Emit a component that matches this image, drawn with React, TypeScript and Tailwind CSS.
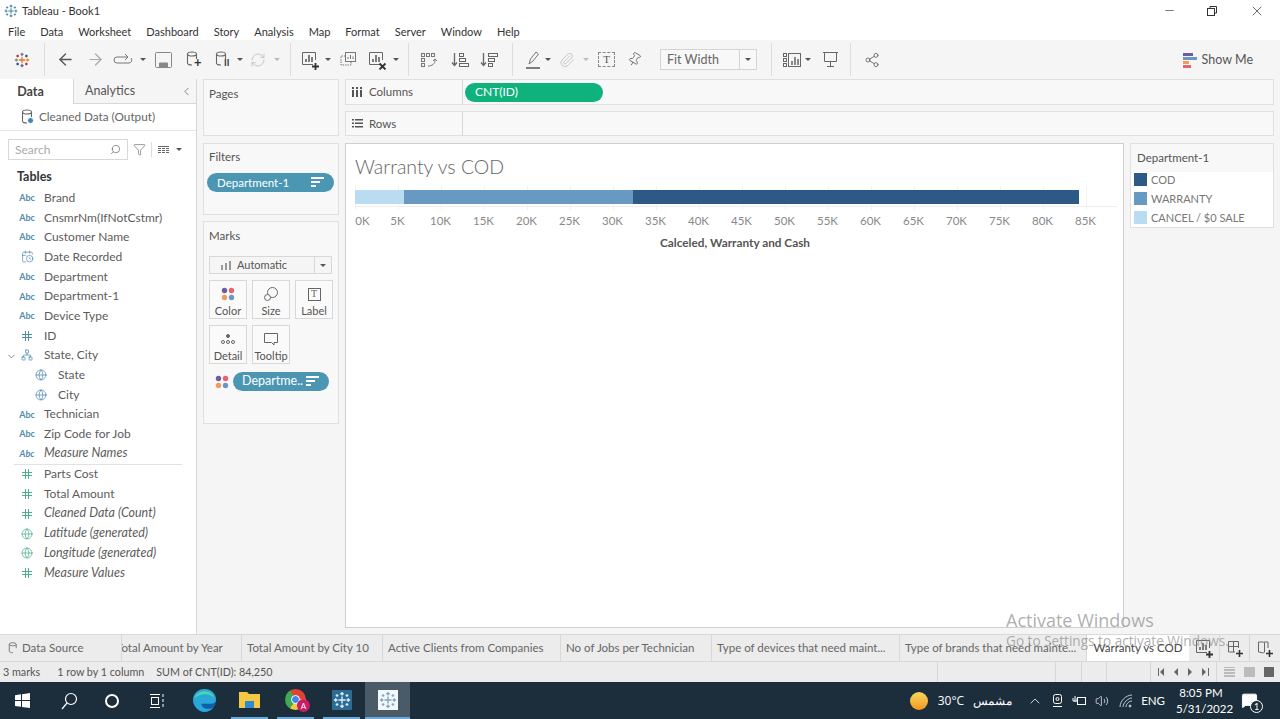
import { ArrowLeft, ArrowRight, CalendarClock, ChevronDown, ChevronLeft, Globe, Network, Search, Filter, X, Minus, Share2, Pin, RefreshCw, Paperclip, Volume2, ChevronUp, MessageSquare } from 'lucide-react';

const FONT = "font-['Lato','Open_Sans',sans-serif]";

const MENU = ['File', 'Data', 'Worksheet', 'Dashboard', 'Story', 'Analysis', 'Map', 'Format', 'Server', 'Window', 'Help'];

type Field = { name: string; kind: 'abc' | 'hash' | 'date' | 'tree' | 'globe'; italic?: boolean; indent?: boolean; green?: boolean };

const DIMENSIONS: Field[] = [
  { name: 'Brand', kind: 'abc' },
  { name: 'CnsmrNm(IfNotCstmr)', kind: 'abc' },
  { name: 'Customer Name', kind: 'abc' },
  { name: 'Date Recorded', kind: 'date' },
  { name: 'Department', kind: 'abc' },
  { name: 'Department-1', kind: 'abc' },
  { name: 'Device Type', kind: 'abc' },
  { name: 'ID', kind: 'hash' },
  { name: 'State, City', kind: 'tree' },
  { name: 'State', kind: 'globe', indent: true },
  { name: 'City', kind: 'globe', indent: true },
  { name: 'Technician', kind: 'abc' },
  { name: 'Zip Code for Job', kind: 'abc' },
  { name: 'Measure Names', kind: 'abc', italic: true },
];

const MEASURES: Field[] = [
  { name: 'Parts Cost', kind: 'hash', green: true },
  { name: 'Total Amount', kind: 'hash', green: true },
  { name: 'Cleaned Data (Count)', kind: 'hash', green: true, italic: true },
  { name: 'Latitude (generated)', kind: 'globe', green: true, italic: true },
  { name: 'Longitude (generated)', kind: 'globe', green: true, italic: true },
  { name: 'Measure Values', kind: 'hash', green: true, italic: true },
];

const TICKS = ['0K', '5K', '10K', '15K', '20K', '25K', '30K', '35K', '40K', '45K', '50K', '55K', '60K', '65K', '70K', '75K', '80K', '85K'];

const TABS = [
  { label: 'Total Amount by City 10', w: 'w-[141px]' },
  { label: 'Active Clients from Companies', w: 'w-[178px]' },
  { label: 'No of Jobs per Technician', w: 'w-[151px]' },
  { label: 'Type of devices that need maint...', w: 'w-[188px]' },
  { label: 'Type of brands that need mainte...', w: 'w-[187px]' },
];

function Db({ className = '', width = 14, height = 17 }: { className?: string; width?: number; height?: number }) {
  return (
    <svg width={width} height={height} viewBox="0 0 14 17" fill="none" stroke="currentColor" strokeWidth="1.100" className={className}>
      <ellipse cx="6" cy="3" rx="4.500" ry="2" />
      <path d="M1.500 3v9c0 1.200 2 2 4.500 2M10.500 3v5" />
    </svg>
  );
}

function FieldIcon({ f }: { f: Field }) {
  const color = f.green ? 'text-[#4fb08e]' : 'text-[#4f8cab]';
  if (f.kind === 'abc') return <span className={`text-[9px] font-bold ${color}`}>Abc</span>;
  if (f.kind === 'hash') {
    return (
      <svg width="10" height="10" viewBox="0 0 10 10" fill="none" stroke="currentColor" className={color}>
        <path d="M3.500 0v10M6.500 0v10M0 3.500h10M0 6.500h10" />
      </svg>
    );
  }
  if (f.kind === 'date') return <CalendarClock size={13} strokeWidth={1.300} className={color} />;
  if (f.kind === 'tree') return <Network size={12} strokeWidth={1.500} className={color} />;
  return <Globe size={12} strokeWidth={1.500} className={color} />;
}

function FieldRow({ f }: { f: Field }) {
  return (
    <div className={`flex h-[19.7px] items-center text-[#5c5c5c] ${f.italic ? 'text-[12.500px] italic' : 'text-[12px]'} ${f.indent ? 'pl-[33px]' : 'pl-[19px]'}`}>
      <span className="flex w-[16px] shrink-0 items-center justify-center"><FieldIcon f={f} /></span>
      <span className="ml-[9px] whitespace-nowrap">{f.name}</span>
    </div>
  );
}

function Sorted() {
  return (
    <svg width="14" height="11" viewBox="0 0 14 11" fill="currentColor">
      <rect x="0" y="0" width="13" height="2" />
      <rect x="0" y="4" width="9" height="2" />
      <rect x="0" y="8" width="5" height="2" />
    </svg>
  );
}

function Dots({ size = 14 }: { size?: number }) {
  return (
    <svg width={size} height={size} viewBox="0 0 14 14">
      <circle cx="3.500" cy="3.500" r="2.700" fill="#6f5c9d" />
      <circle cx="10.500" cy="3.500" r="2.700" fill="#e8636b" />
      <circle cx="3.500" cy="10.500" r="2.700" fill="#ef9c64" />
      <circle cx="10.500" cy="10.500" r="2.700" fill="#6b97c6" />
    </svg>
  );
}

function MarkCard({ label, children }: { label: string; children: React.ReactNode }) {
  return (
    <div className="flex h-[39px] w-[38px] flex-col items-center border border-[#d8d8d8] bg-[#fafafa] pt-[4px]">
      <div className="flex h-[18px] items-center justify-center text-[#666]">{children}</div>
      <span className="mt-[1px] text-[11px] leading-[14px] text-[#555]">{label}</span>
    </div>
  );
}

function BarIcon({ plus, x }: { plus?: boolean; x?: boolean }) {
  return (
    <svg width="20" height="20" viewBox="0 0 20 20" fill="none" stroke="#666" strokeWidth="1">
      <path d="M13 14.500H2.500V2.500H15.500V10" />
      <path d="M6 12V9M9 12V5M12 12V7" strokeWidth="1.500" stroke="#555" />
      {plus && <path d="M12 16.500h7M15.500 13v7" strokeWidth="1.800" stroke="#333" />}
      {x && <path d="M12.500 13.500l6 6M18.500 13.500l-6 6" strokeWidth="1.800" stroke="#333" />}
    </svg>
  );
}

function Caret({ light, className = '' }: { light?: boolean; className?: string }) {
  return <span className={`inline-block h-0 w-0 shrink-0 border-x-[3px] border-t-[3px] border-x-transparent ${light ? 'border-t-[#bbb]' : 'border-t-[#555]'} ${className}`} />;
}

function Sep({ className = '' }: { className?: string }) {
  return <span className={`h-[33px] w-px shrink-0 bg-[#dcdcdc] ${className}`} />;
}

function TableauMark({ size = 20, color = 'multi' }: { size?: number; color?: string }) {
  const c = (v: string) => (color === 'multi' ? v : color);
  return (
    <svg width={size} height={size} viewBox="0 0 20 20" fill="none" strokeWidth="1.600">
      <path d="M10 6v8M6 10h8" stroke={c('#e8762d')} />
      <path d="M10 1v4M8 3h4" stroke={c('#59879b')} />
      <path d="M10 15v4M8 17h4" stroke={c('#5b6591')} />
      <path d="M1 10h4M3 8v4" stroke={c('#7099a6')} />
      <path d="M15 10h4M17 8v4" stroke={c('#eb912b')} />
      <path d="M4.500 3.500v3M3 5h3" stroke={c('#c72035')} />
      <path d="M15.500 3.500v3M14 5h3" stroke={c('#1f447e')} />
      <path d="M4.500 13.500v3M3 15h3" stroke={c('#1f447e')} />
      <path d="M15.500 13.500v3M14 15h3" stroke={c('#c72035')} />
    </svg>
  );
}

export default function App() {
  return (
    <div className={`relative flex h-[719px] w-[1280px] flex-col overflow-hidden bg-[#f5f5f5] ${FONT} text-[#555]`}>
      {/* Title bar */}
      <div className="flex h-[21px] items-center bg-white pl-[4px]">
        <TableauMark size={14} color="#4a86a8" />
        <span className="ml-[4px] pt-[2px] text-[11px] text-[#333]">Tableau - Book1</span>
        <div className="ml-auto flex items-center text-[#333]">
          <Minus size={13} strokeWidth={1.200} className="mr-[30px]" />
          <svg width="12" height="12" viewBox="0 0 12 12" fill="none" stroke="#333" className="mr-[31px]"><rect x="1.500" y="3.500" width="7" height="7" /><path d="M4 3.500V1.500h6.500V8H8.500" /></svg>
          <X size={16} strokeWidth={1.100} className="mr-[15px]" />
        </div>
      </div>

      {/* Menu bar */}
      <div className="flex h-[19px] items-center gap-[15px] bg-white pl-[8px] pt-[3px] text-[11px] text-[#333]">
        {MENU.map((m) => <span key={m}>{m}</span>)}
      </div>

      {/* Toolbar */}
      <div className="flex h-[39px] items-center bg-[#f5f5f5] pl-[14px] text-[#666]">
        <TableauMark size={16} />
        <Sep className="ml-[14px]" />
        <ArrowLeft size={19} strokeWidth={1.700} className="ml-[11px] text-[#555]" />
        <ArrowRight size={19} strokeWidth={1.500} className="ml-[11px] text-[#aaa]" />
        <svg width="20" height="14" viewBox="0 0 20 14" fill="none" stroke="#777" className="ml-[8px]"><path d="M14 4H4a3 3 0 0 0 0 6h12a3 3 0 0 0 2-5M12 1l3 3-3 3" /></svg>
        <Caret className="ml-[7px]" />
        <svg width="17" height="16" viewBox="0 0 17 16" fill="none" stroke="#888" className="ml-[9px]"><rect x=".5" y=".5" width="16" height="15" rx="1" /><path d="M4.500 15v-4h8v4" fill="#888" /></svg>
        <span className="relative ml-[14px] flex"><Db /><span className="absolute -bottom-[1px] left-[8px] text-[13px] font-bold leading-none text-[#333]">+</span></span>
        <span className="relative ml-[15px] flex"><Db /><span className="absolute bottom-[1px] left-[9px] text-[9px] font-bold leading-none text-[#333]">II</span></span>
        <Caret className="ml-[8px]" />
        <RefreshCw size={16} strokeWidth={1.200} className="ml-[7px] text-[#bbb]" />
        <Caret light className="ml-[8px]" />
        <Sep className="ml-[10px]" />
        <span className="ml-[9px] flex"><BarIcon plus /></span>
        <Caret className="ml-[5px]" />
        <svg width="20" height="20" viewBox="0 0 20 20" fill="none" stroke="#777" className="ml-[7px]"><rect x="7.500" y="2.500" width="10" height="9" /><path d="M10 9V7M12.500 9V5M15 9V6.500" /><path d="M7.500 6H3v9h10v-3.500" strokeDasharray="1.500 1" /></svg>
        <span className="ml-[9px] flex"><BarIcon x /></span>
        <Caret className="ml-[6px]" />
        <Sep className="ml-[9px]" />
        <svg width="20" height="20" viewBox="0 0 20 20" fill="none" stroke="#777" className="ml-[10px]"><rect x="2.500" y="3.500" width="3" height="3" /><rect x="7.500" y="3.500" width="3" height="3" /><rect x="12.500" y="3.500" width="3" height="3" /><rect x="2.500" y="8.500" width="3" height="3" /><rect x="2.500" y="13.500" width="3" height="3" /><path d="M9 16c4 0 7-2 7-6M14 11l2-2 2 2" /></svg>
        <svg width="20" height="18" viewBox="0 0 20 18" fill="none" stroke="#666" className="ml-[11px]"><path d="M4.500 2v12M2 11.500l2.500 3 2.500-3" strokeWidth="1.300" /><rect x="9.500" y="2.500" width="4" height="3" /><rect x="9.500" y="7.500" width="6" height="3" /><rect x="9.500" y="12.500" width="9" height="3" /></svg>
        <svg width="20" height="18" viewBox="0 0 20 18" fill="none" stroke="#666" className="ml-[9px]"><path d="M4.500 2v12M2 11.500l2.500 3 2.500-3" strokeWidth="1.300" /><rect x="9.500" y="2.500" width="9" height="3" /><rect x="9.500" y="7.500" width="6" height="3" /><rect x="9.500" y="12.500" width="4" height="3" /></svg>
        <Sep className="ml-[13px]" />
        <svg width="18" height="20" viewBox="0 0 18 20" fill="none" stroke="#777" className="ml-[12px]"><path d="M4 14l1.500-5L11 2l2.500 2L8 11z" /><path d="M1 18h14" strokeWidth="1.500" stroke="#555" /></svg>
        <Caret className="ml-[2px]" />
        <Paperclip size={16} strokeWidth={1.200} className="ml-[8px] text-[#bbb]" />
        <Caret light className="ml-[8px]" />
        <span className="ml-[9px] flex h-[15px] w-[17px] items-center justify-center border border-dashed border-[#888] font-['Liberation_Serif',serif] text-[11px] text-[#555]">T</span>
        <Pin size={15} strokeWidth={1.300} className="ml-[12px] rotate-[30deg]" />
        <div className="ml-[18px] flex h-[21px] w-[97px] shrink-0 items-center border border-[#d4d4d4] bg-[#f8f8f8] text-[12.500px] text-[#666]">
          <span className="flex-1 pl-[6px] pt-[1px]">Fit Width</span>
          <span className="flex h-full w-[17px] items-center justify-center border-l border-[#d4d4d4]"><Caret /></span>
        </div>
        <Sep className="ml-[14px]" />
        <svg width="20" height="16" viewBox="0 0 20 16" fill="none" stroke="#666" className="ml-[10px]"><rect x="1.500" y="1.500" width="3" height="3" /><rect x="1.500" y="6.500" width="3" height="3" /><rect x="1.500" y="11.500" width="3" height="3" /><rect x="6.500" y="1.500" width="12" height="13" /><path d="M10 13V9M13 13V5M16 13V7" strokeWidth="1.500" /></svg>
        <Caret className="ml-[3px]" />
        <svg width="17" height="17" viewBox="0 0 17 17" fill="none" stroke="#666" className="ml-[11px]"><path d="M1 1.500h15M2.500 1.500v9h12v-9M8.500 10.500v5M5 15.500h7" /></svg>
        <Sep className="ml-[11px]" />
        <Share2 size={16} strokeWidth={1.300} className="ml-[13px]" />
        <div className="ml-auto mr-[27px] flex items-center gap-[5px] pt-[1px] text-[12.500px] text-[#555]">
          <svg width="14" height="15" viewBox="0 0 14 15"><rect y="0" width="10" height="3" fill="#6f5c9d" /><rect y="4" width="14" height="3" fill="#6b97c6" /><rect y="8" width="6" height="3" fill="#ef9c64" /><rect y="12" width="8" height="3" fill="#e8636b" /></svg>
          Show Me
        </div>
      </div>

      {/* Body */}
      <div className="flex min-h-0 flex-1">
        {/* Data pane */}
        <aside className="flex w-[197px] shrink-0 flex-col border-r border-[#d8d8d8] bg-white">
          <div className="flex h-[25px] text-[12.500px]">
            <div className="flex w-[73px] items-center justify-center pr-[12px] pt-[1px] font-bold text-[#444]">Data</div>
            <div className="flex flex-1 items-center border-b border-l border-[#d8d8d8] bg-[#f5f5f5] pl-[11px] pt-[1px]">
              Analytics
              <ChevronLeft size={13} strokeWidth={1.300} className="ml-auto mr-[3px]" />
            </div>
          </div>
          <div className="flex h-[27px] items-center border-b border-[#e4e4e4] pl-[21px] text-[11.750px] text-[#666]">
            <span className="relative flex"><Db /><span className="absolute bottom-[2px] left-[6px] h-[7px] w-[7px] rounded-full border border-white bg-[#3c88b5]" /></span>
            <span className="ml-[4px]">Cleaned Data (Output)</span>
          </div>
          <div className="mt-[8px] flex h-[21px] items-center pl-[8px]">
            <div className="flex h-[21px] w-[120px] items-center justify-between border border-[#d8d8d8] px-[6px] text-[12px] text-[#aaa]">
              Search
              <Search size={11} strokeWidth={1.500} className="-scale-x-100 text-[#666]" />
            </div>
            <Filter size={13} strokeWidth={1.100} className="ml-[5px] text-[#555]" />
            <span className="ml-[5px] h-[15px] w-px bg-[#ddd]" />
            <svg width="11" height="8" viewBox="0 0 11 8" className="ml-[6px]" fill="#666"><path d="M0 0h11v1H0zM0 2h3v1H0zM4 2h3v1H4zM8 2h3v1H8zM0 4h3v1H0zM4 4h3v1H4zM8 4h3v1H8zM0 6h3v1H0zM4 6h3v1H4zM8 6h3v1H8z" /></svg>
            <Caret className="ml-[7px]" />
          </div>
          <div className="mt-[8px] pl-[17px] text-[12.500px] font-bold leading-[18px] text-[#333]">Tables</div>
          <div className="relative mt-[2px]">
            <ChevronDown size={11} strokeWidth={1.500} className="absolute left-[6px] top-[163px] text-[#555]" />
            {DIMENSIONS.map((f) => <FieldRow key={f.name} f={f} />)}
          </div>
          <div className="mx-[14px] h-px bg-[#e2e2e2]" />
          {MEASURES.map((f) => <FieldRow key={f.name} f={f} />)}
        </aside>

        {/* Cards column */}
        <div className="flex w-[148px] shrink-0 flex-col pl-[6px]">
          <section className="h-[57px] w-[136px] border border-[#e0e0e0] bg-[#f8f8f8] pl-[5px] pt-[5px] text-[11.500px]">Pages</section>
          <section className="mt-[7px] h-[72px] w-[136px] border border-[#e0e0e0] bg-[#f8f8f8] pt-[4px] text-[11.500px]">
            <div className="pl-[5px]">Filters</div>
            <div className="ml-[3px] mt-[8px] flex h-[19px] w-[127px] items-center justify-between rounded-full bg-[#4b97b3] pl-[10px] pr-[9px] text-[11.500px] text-white">
              Department-1
              <Sorted />
            </div>
          </section>
          <section className="mt-[6px] h-[203px] w-[136px] border border-[#e0e0e0] bg-[#f8f8f8] pt-[5px] text-[11.500px]">
            <div className="pl-[5px]">Marks</div>
            <div className="ml-[5px] mt-[12px] flex h-[18px] w-[123px] items-center border border-[#d8d8d8] bg-[#f5f5f5] text-[11px]">
              <svg width="10" height="9" viewBox="0 0 10 9" fill="#999" className="ml-[11px]"><path d="M0 4h2v5H0zM4 2h2v7H4zM8 0h2v9H8z" /></svg>
              <span className="ml-[6px] flex-1">Automatic</span>
              <span className="flex h-full w-[17px] items-center justify-center border-l border-[#d8d8d8]"><Caret /></span>
            </div>
            <div className="ml-[5px] mt-[6px] flex gap-[5px]">
              <MarkCard label="Color"><Dots /></MarkCard>
              <MarkCard label="Size">
                <svg width="16" height="16" viewBox="0 0 16 16" fill="none" stroke="#666"><circle cx="9.500" cy="6.500" r="5" /><circle cx="4.500" cy="11.500" r="3" fill="#fafafa" /></svg>
              </MarkCard>
              <MarkCard label="Label"><span className="flex h-[13px] w-[13px] items-center justify-center border border-[#666] font-['Liberation_Serif',serif] text-[10px] leading-none">T</span></MarkCard>
            </div>
            <div className="ml-[5px] mt-[6px] flex gap-[5px]">
              <MarkCard label="Detail">
                <svg width="14" height="12" viewBox="0 0 14 12" fill="none" stroke="#666"><circle cx="7" cy="3" r="1.500" fill="#666" /><circle cx="2" cy="9" r="1.500" /><circle cx="7" cy="9" r="1.500" /><circle cx="12" cy="9" r="1.500" /></svg>
              </MarkCard>
              <MarkCard label="Tooltip">
                <svg width="14" height="13" viewBox="0 0 14 13" fill="none" stroke="#666"><path d="M.5.500h13v9H10V12L7.500 9.500H.5z" /></svg>
              </MarkCard>
            </div>
            <div className="ml-[11px] mt-[8px] flex items-center gap-[4px]">
              <Dots />
              <div className="flex h-[19px] w-[96px] items-center justify-between rounded-full bg-[#4b97b3] pl-[9px] pr-[9px] text-[12.500px] text-white">
                Departme..
                <Sorted />
              </div>
            </div>
          </section>
        </div>

        {/* Shelves and view */}
        <div className="flex min-w-0 flex-1 flex-col">
          <div className="mr-[6px] flex h-[26px] items-center border border-[#e0e0e0] bg-[#f8f8f8] text-[11.500px]">
            <div className="flex h-full w-[117px] items-center border-r border-[#d8d8d8] pl-[6px]">
              <svg width="11" height="10" viewBox="0 0 11 10" fill="#555"><path d="M0 0h2v2H0zM0 3h2v7H0zM4 0h2v2H4zM4 3h2v7H4zM8 0h2v2H8zM8 3h2v7H8z" /></svg>
              <span className="ml-[6px]">Columns</span>
            </div>
            <div className="ml-[2px] flex h-[19px] w-[138px] items-center rounded-full bg-[#0fb27d] pl-[10px] text-[12px] text-white">CNT(ID)</div>
          </div>
          <div className="mr-[6px] mt-[6px] flex h-[25px] items-center border border-[#e0e0e0] bg-[#f8f8f8] text-[11.500px]">
            <div className="flex h-full w-[117px] items-center border-r border-[#d8d8d8] pl-[6px]">
              <svg width="11" height="9" viewBox="0 0 11 9" fill="#555"><path d="M0 0h2v1.500H0zM3 0h8v1.500H3zM0 3.500h2V5H0zM3 3.500h8V5H3zM0 7h2v1.500H0zM3 7h8v1.500H3z" /></svg>
              <span className="ml-[6px]">Rows</span>
            </div>
          </div>

          <div className="mt-[7px] flex items-start">
            {/* View */}
            <div className="h-[485px] w-[779px] shrink-0 border border-[#cfcfcf] bg-white">
              <div className="pl-[9px] pt-[10px] text-[19.500px] font-light leading-[26px] text-[#666]">Warranty vs COD</div>
              <div className="relative ml-[9px] mt-[10px] w-[762px]">
                {/* Faint gridlines behind the bar */}
                <div className="absolute -top-[4px] left-0 flex h-[24px]">
                  {TICKS.map((t) => <div key={t} className="w-[43px] shrink-0 border-l border-[#f2f2f2]" />)}
                </div>
                <div className="relative flex h-[14px]">
                  <div className="w-[49px] bg-[#b9dcf1]" />
                  <div className="w-[229px] bg-[#6899c3]" />
                  <div className="w-[446px] bg-[#2c5985]" />
                </div>
                <div className="mt-[2px] h-px bg-[#eeeeee]" />
                <div className="mt-[7px] flex text-[11.500px] leading-[14px] text-[#888]">
                  {TICKS.map((t, i) => (
                    <div key={t} className="flex w-[43px] justify-center" style={{ marginLeft: i === 0 ? -22 : 0, paddingLeft: i === 0 ? 16 : 0 }}>{t}</div>
                  ))}
                </div>
                <div className="mt-[8px] w-[760px] text-center text-[11.800px] font-bold leading-[14px] text-[#555]">Calceled, Warranty and Cash</div>
              </div>
            </div>
            {/* Legend */}
            <div className="ml-[6px] h-[85px] w-[144px] border border-[#e0e0e0] bg-white">
              <div className="flex h-[28px] items-center bg-[#f8f8f8] pl-[6px] text-[11.500px]">Department-1</div>
              <div className="flex flex-col gap-[6px] pl-[3px] pt-[1px] text-[11px] leading-[13px] text-[#777]">
                <div className="flex items-center gap-[4px]"><span className="h-[13px] w-[13px] bg-[#2c5985]" />COD</div>
                <div className="flex items-center gap-[4px]"><span className="h-[13px] w-[13px] bg-[#6899c3]" />WARRANTY</div>
                <div className="flex items-center gap-[4px]"><span className="h-[13px] w-[13px] bg-[#b9dcf1]" />CANCEL / $0 SALE</div>
              </div>
            </div>
          </div>
        </div>
      </div>

      {/* Sheet tabs */}
      <div className="flex h-[28px] shrink-0 items-stretch border-y border-[#d8d8d8] bg-[#ececec] text-[11.500px] text-[#666]">
        <div className="flex w-[122px] shrink-0 items-center border-r border-[#d8d8d8] pl-[8px]">
          <Db width={11} height={13} className="mr-[3px]" />
          Data Source
        </div>
        <div className="flex w-[120px] shrink-0 items-center overflow-hidden whitespace-nowrap border-r border-[#d8d8d8]">
          <span className="-ml-[6px]">Total Amount by Year</span>
        </div>
        {TABS.map((t) => (
          <div key={t.label} className={`flex ${t.w} shrink-0 items-center overflow-hidden whitespace-nowrap border-r border-[#d8d8d8] pl-[5px]`}>{t.label}</div>
        ))}
        <div className="flex w-[102px] shrink-0 items-center justify-center whitespace-nowrap bg-white text-[11.500px] text-[#444]">Warranty vs COD</div>
        <div className="flex w-[31px] shrink-0 items-center justify-center border-r border-[#d8d8d8]"><BarIcon plus /></div>
        <div className="flex w-[30px] shrink-0 items-center justify-center border-r border-[#d8d8d8]">
          <svg width="18" height="18" viewBox="0 0 18 18" fill="none" stroke="#666"><path d="M9 13H2.500V2.500h10V9M7.500 2.500V13M2.500 7.500h10" /><path d="M10 14.500h7M13.500 11v7" strokeWidth="1.600" stroke="#333" /></svg>
        </div>
        <div className="flex flex-1 items-center justify-center">
          <svg width="18" height="18" viewBox="0 0 18 18" fill="none" stroke="#666"><path d="M2.500 3v10l5 1 1-1V4l-1-1zM8 3h4v6" /><path d="M10 14.500h7M13.500 11v7" strokeWidth="1.600" stroke="#333" /></svg>
        </div>
      </div>

      {/* Status bar */}
      <div className="flex h-[20px] shrink-0 items-center bg-[#ececec] pl-[3px] text-[10.750px] text-[#555]">
        <span>3 marks</span>
        <span className="ml-[17px]">1 row by 1 column</span>
        <span className="ml-[12px]">SUM of CNT(ID): 84,250</span>
        <div className="ml-auto flex h-full items-center text-[#666]">
          <span className="h-full w-[118px] border-l border-[#d8d8d8]" />
          <span className="h-full w-[26px] border-l border-[#d8d8d8]" />
          <span className="h-full w-[25px] border-l border-[#d8d8d8]" />
          <span className="h-full w-[44px] border-l border-[#d8d8d8]" />
          <div className="flex h-full w-[67px] items-center justify-center border-x border-[#d8d8d8]">
            <svg width="52" height="8" viewBox="0 0 52 8" fill="#666">
              <path d="M0 0h1v8H0zM6 0v8L2 4zM20 0v8l-4-4zM30 0v8l4-4zM44 0v8l4-4zM50 0h1v8h-1z" />
            </svg>
          </div>
          <div className="flex w-[63px] items-center justify-center gap-[9px]">
            <span className="h-[10px] w-[11px] bg-[repeating-linear-gradient(0deg,#bbb_0_2px,#ececec_2px_3px)]" />
            <span className="h-[10px] w-[11px] bg-[#bbb]" />
            <span className="h-[10px] w-[10px] bg-[#666]" />
          </div>
        </div>
      </div>

      {/* Taskbar */}
      <div className="flex h-[37px] shrink-0 items-center bg-[#1c2d3c] text-white">
        <svg width="15" height="15" viewBox="0 0 15 15" fill="#fff" className="ml-[15px]"><path d="M0 2.200l6-.9v5.800H0zM7 1.200L15 0v7.100H7zM0 8h6v5.800l-6-.9zM7 8h8v7l-8-1.100z" /></svg>
        <svg width="18" height="18" viewBox="0 0 18 18" fill="none" stroke="#fff" strokeWidth="1.200" className="ml-[30px]"><circle cx="11" cy="7" r="5.500" /><path d="M7 11l-5 6" /></svg>
        <span className="ml-[27px] h-[14px] w-[14px] rounded-full border-2 border-white" />
        <svg width="16" height="16" viewBox="0 0 16 16" fill="none" stroke="#fff" className="ml-[30px]"><path d="M1 1.500h10M1 14.500h10M14 1v3M14 6v3M14 11v3" /><rect x="2.500" y="4.500" width="7" height="7" /></svg>
        <svg width="25" height="25" viewBox="0 0 24 24" className="ml-[27px]">
          <circle cx="12" cy="12" r="11" fill="#0f5ea8" />
          <path d="M1 12C1 5 6 1 12 1c6 0 11 4 11 10 0 3-2 4-5 4H9c0 3 3 5 7 5 2 0 4-.5 5-1.500C19 21 16 23 12 23 9 23 7 22 5 20 3 18 1 15 1 12z" fill="#2aa7d8" />
          <path d="M2 10C4 5 8 3 12 3c5 0 9 3 10 8-1-3-5-5-9-5-5 0-9 2-11 4z" fill="#4fd6a8" />
        </svg>
        <div className="ml-[14px] flex h-full w-[37px] items-center justify-center border-b-[2px] border-[#6aa9d8]">
          <svg width="21" height="19" viewBox="0 0 21 19"><path d="M0 2h8l2 2h11v14H0z" fill="#f6c945" /><rect x="6" y="11" width="9" height="7" fill="#2e8bd0" /></svg>
        </div>
        <div className="relative ml-[9px] flex h-full w-[37px] items-center justify-center border-b-[2px] border-[#6aa9d8]">
          <span className="flex h-[21px] w-[21px] items-center justify-center rounded-full bg-[conic-gradient(#e34133_0_90deg,#f6c945_90deg_210deg,#3cab52_210deg_330deg,#e34133_330deg)]">
            <span className="h-[9px] w-[9px] rounded-full border border-white bg-[#3f86ee]" />
          </span>
          <span className="absolute bottom-[5px] right-[4px] flex h-[13px] w-[13px] items-center justify-center rounded-full bg-[#c91d63] text-[8px]">A</span>
        </div>
        <div className="ml-[9px] flex h-full w-[37px] items-center justify-center border-b-[2px] border-[#6aa9d8]">
          <span className="flex h-[20px] w-[20px] items-center justify-center bg-[#2a6c94]"><TableauMark size={18} color="#dcecf5" /></span>
        </div>
        <div className="ml-[5px] flex h-full w-[45px] items-center justify-center border-b-[2px] border-[#6aa9d8] bg-[#4a5a66]">
          <span className="flex h-[20px] w-[20px] items-center justify-center bg-[#f4f7f9]"><TableauMark size={18} color="#7fa9c4" /></span>
        </div>
        <div className="ml-auto flex items-center text-[12px]">
          <span className="h-[18px] w-[18px] rounded-full bg-gradient-to-b from-[#f9d65c] to-[#f09a1c]" />
          <span className="ml-[10px] font-['Open_Sans',sans-serif]">30°C</span>
          <span className="ml-[9px] font-['Noto_Sans',sans-serif] text-[12px]">مشمس</span>
          <ChevronUp size={16} strokeWidth={1.200} className="ml-[15px]" />
          <svg width="13" height="15" viewBox="0 0 13 15" fill="none" stroke="#fff" className="ml-[8px]"><rect x="2.500" y="1.500" width="8" height="9" rx="2" /><circle cx="6.500" cy="6" r="1.500" /><path d="M2 13.500h9" /></svg>
          <svg width="15" height="12" viewBox="0 0 15 12" fill="none" stroke="#fff" className="ml-[8px]"><rect x="5.500" y="2.500" width="8" height="7" /><path d="M3 1v6M1 3v3h4V3" /></svg>
          <Volume2 size={14} strokeWidth={1.200} className="ml-[8px]" />
          <svg width="14" height="14" viewBox="0 0 14 14" fill="none" stroke="#c3cbd1" className="ml-[10px]"><path d="M1 13C1 7 7 1 13 1M4 13c0-4 5-9 9-9M7 13c0-3 3-6 6-6" /><circle cx="11" cy="12" r="1" fill="#c3cbd1" /></svg>
          <span className="ml-[8px] text-[11.500px]">ENG</span>
          <div className="ml-[11px] w-[50px] text-center text-[11.500px] leading-[16px]">
            <div>8:05 PM</div>
            <div>5/31/2022</div>
          </div>
          <span className="relative ml-[15px] mr-[22px] flex">
            <MessageSquare size={17} strokeWidth={1.300} fill="#fff" />
            <span className="absolute -bottom-[4px] -right-[5px] flex h-[13px] w-[13px] items-center justify-center rounded-full border border-white bg-[#1c2d3c] text-[9px]">1</span>
          </span>
        </div>
      </div>

      {/* Windows watermark over the page */}
      <div className="pointer-events-none absolute left-[1006px] top-[608px] font-['Open_Sans',sans-serif] text-[#8b8b8b]/70">
        <div className="text-[18px] leading-[24px]">Activate Windows</div>
        <div className="whitespace-nowrap text-[13.600px] leading-[18px]">Go to Settings to activate Windows.</div>
      </div>
    </div>
  );
}
